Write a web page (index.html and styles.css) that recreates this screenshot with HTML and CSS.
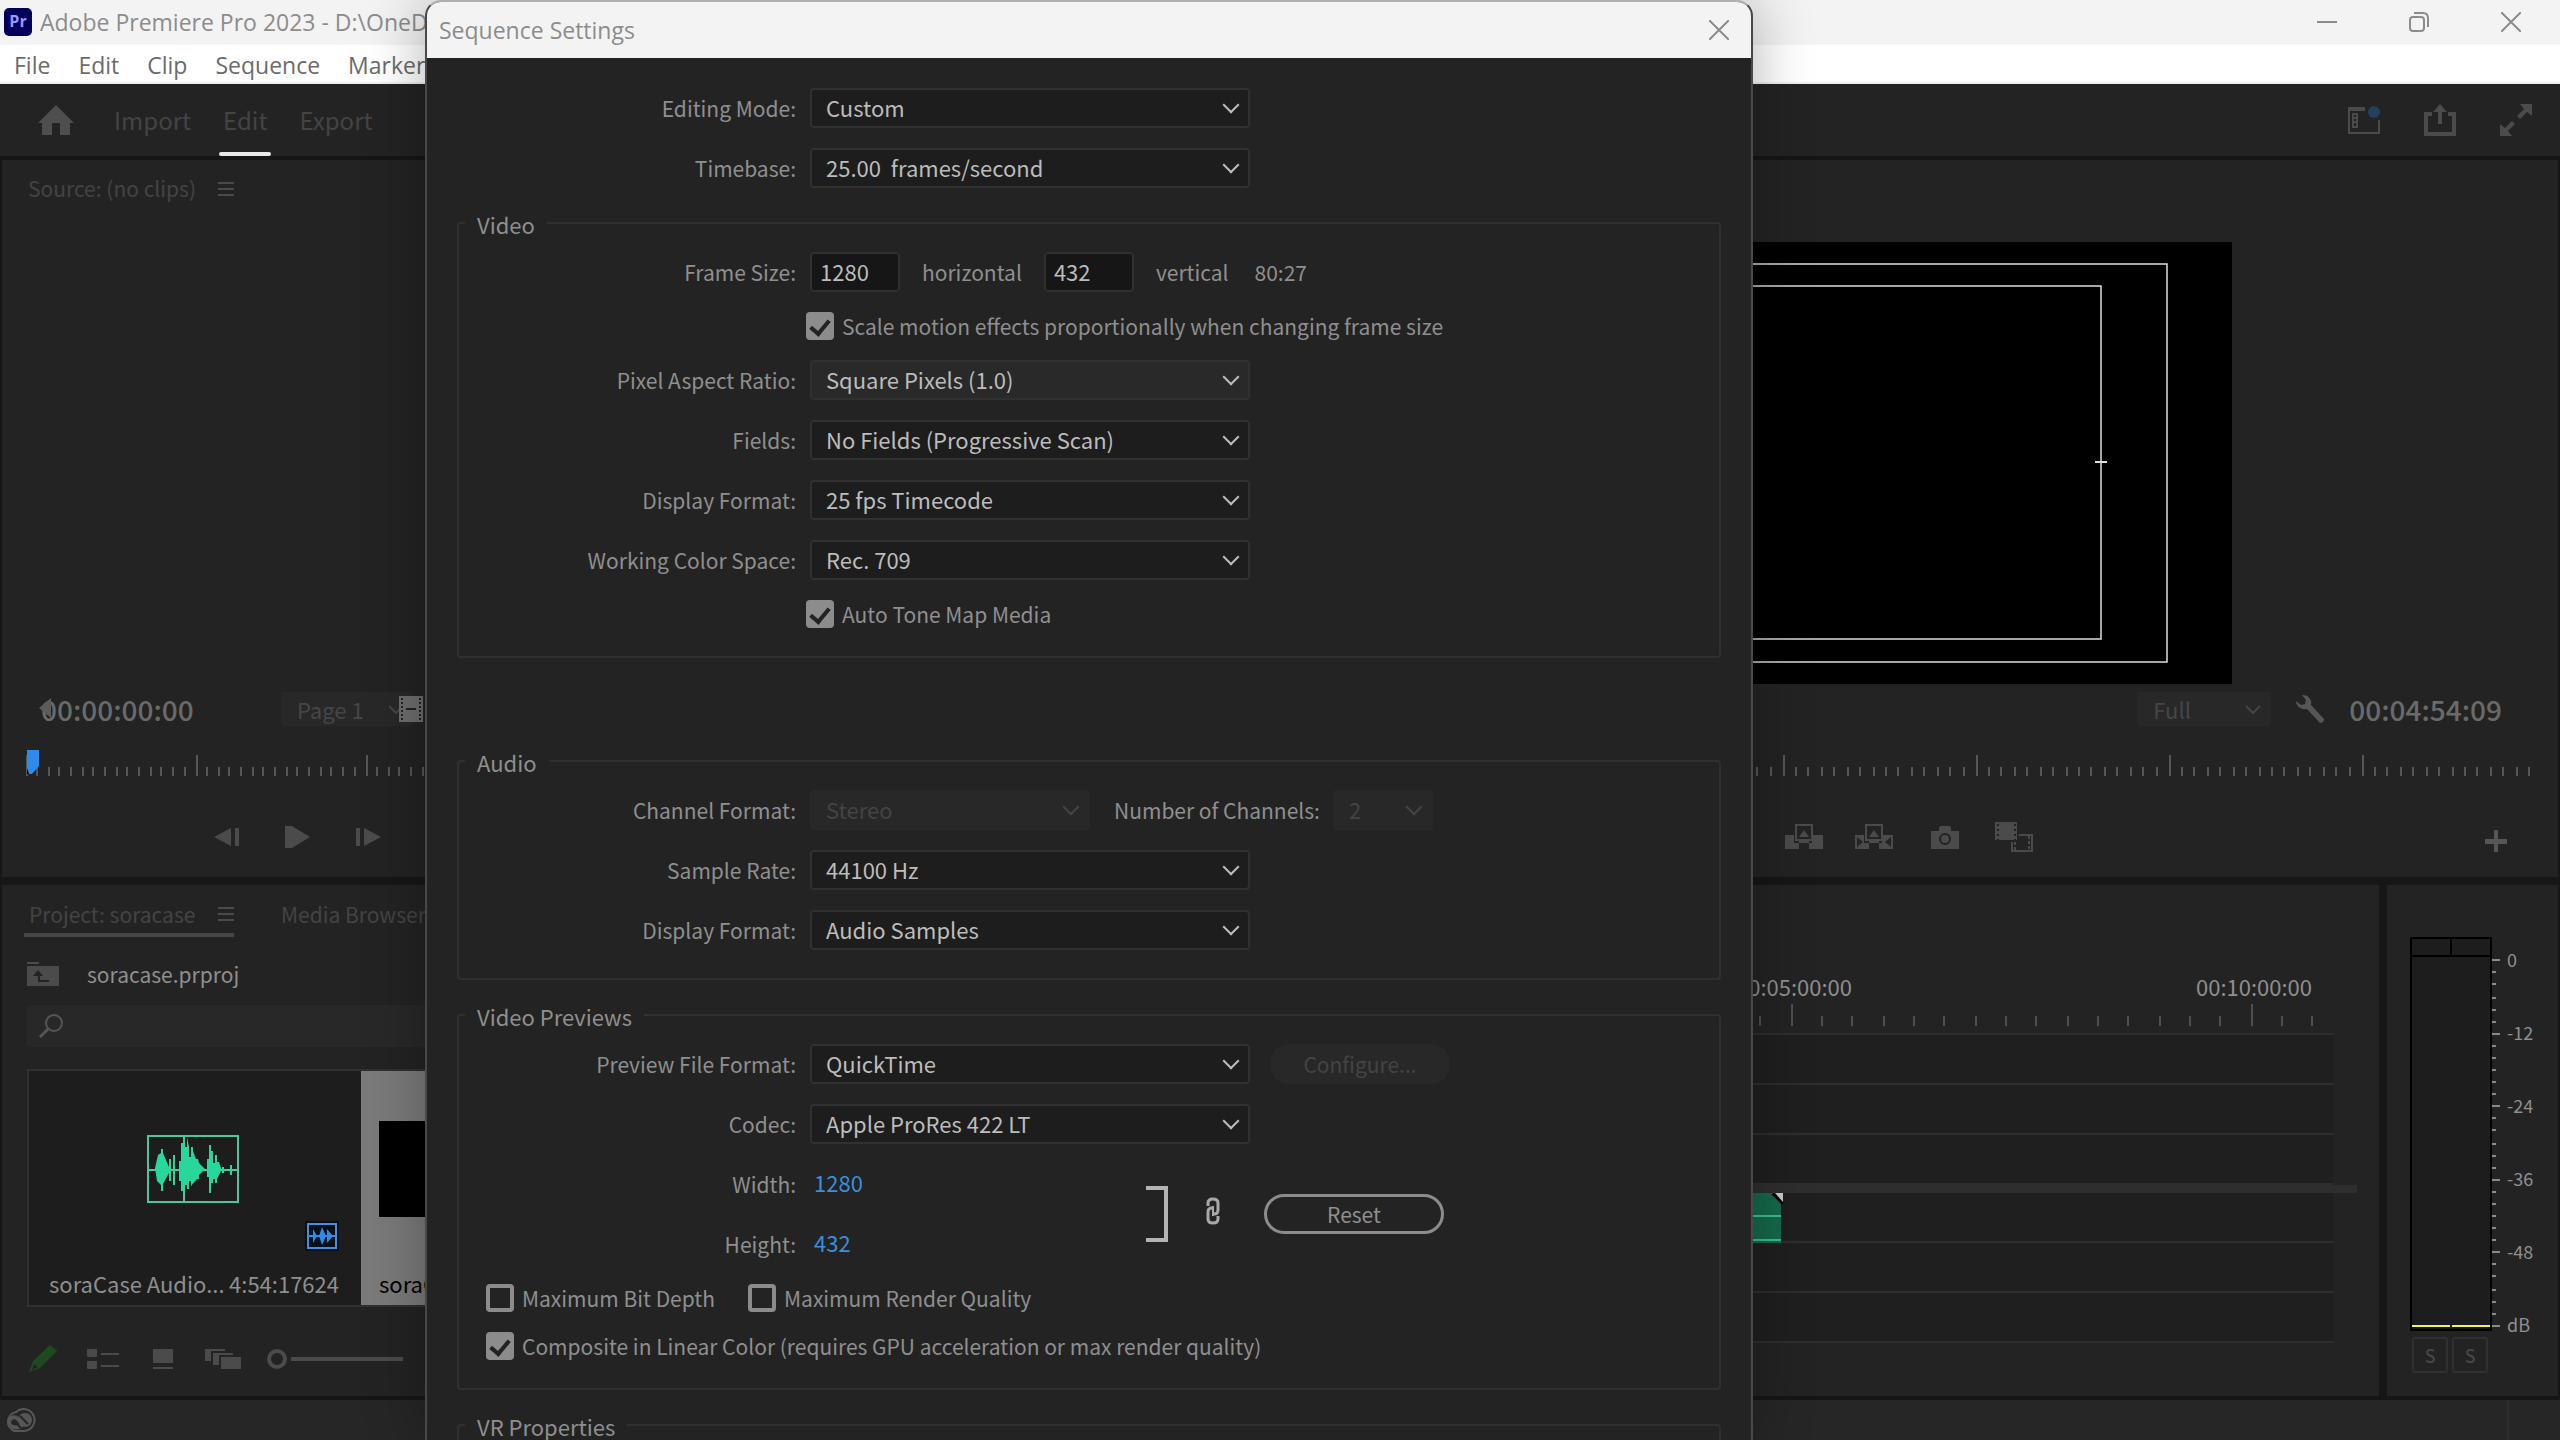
FILE: index.html
```html
<!DOCTYPE html>
<html lang="en">
<head>
<meta charset="utf-8">
<title>Adobe Premiere Pro 2023</title>
<link rel="stylesheet" href="styles.css">
</head>
<body>
<div class="app">
  <header class="titlebar">
    <span class="pr-logo">Pr</span>
    <span class="app-title">Adobe Premiere Pro 2023 - D:\OneD</span>
    <div class="window-controls">
      <button type="button" aria-label="Minimize"><svg width="20" height="20" viewBox="0 0 20 20"><path d="M0 10H20" stroke="#8c8c8c" stroke-width="2"/></svg></button>
      <button type="button" aria-label="Restore"><svg width="20" height="20" viewBox="0 0 20 20" fill="none" stroke="#8c8c8c" stroke-width="2"><rect x="1" y="5" width="14" height="14" rx="3"/><path d="M5 1H14Q19 1 19 6V15"/></svg></button>
      <button type="button" aria-label="Close"><svg width="20" height="20" viewBox="0 0 20 20"><path d="M0 0L20 20M20 0L0 20" stroke="#8c8c8c" stroke-width="2"/></svg></button>
    </div>
  </header>

  <nav class="menubar">
    <button type="button">File</button>
    <button type="button">Edit</button>
    <button type="button">Clip</button>
    <button type="button">Sequence</button>
    <button type="button">Markers</button>
  </nav>

  <div class="modes">
    <button type="button" class="home" aria-label="Home"><svg width="36" height="30" viewBox="0 0 36 30"><path d="M18 0L36 18H32V30H22V19Q22 18 21 18H15Q14 18 14 19V30H4V18H0Z" fill="#4e4e4e"/></svg></button>
    <button type="button" class="mode">Import</button>
    <button type="button" class="mode mode-active">Edit</button>
    <button type="button" class="mode">Export</button>
    <div class="mode-tools">
      <button type="button" aria-label="Workspaces"><svg width="32" height="32" viewBox="0 0 32 32"><path d="M0 3H17V7H2V28H30V16H32V30H0Z" fill="#4b4b4b"/><rect x="5" y="10" width="4" height="13" fill="none" stroke="#4b4b4b" stroke-width="2"/><path d="M6 14H9M6 18H9" stroke="#4b4b4b" stroke-width="2"/><circle cx="26" cy="8" r="6" fill="#23405c"/></svg></button>
      <button type="button" aria-label="Quick export"><svg width="32" height="32" viewBox="0 0 32 32"><path d="M8 10H2V30H30V10H24" fill="none" stroke="#4b4b4b" stroke-width="4"/><path d="M16 0L23 8H18V20H14V8H9Z" fill="#4b4b4b"/></svg></button>
      <button type="button" aria-label="Full screen"><svg width="32" height="32" viewBox="0 0 32 32"><path d="M20 0H32V12L27 8L20 15L17 12L24 5ZM12 32H0V20L5 24L12 17L15 20L8 27Z" fill="#4b4b4b"/></svg></button>
    </div>
  </div>

  <main class="workspace">
    <div class="upper">
      <section class="panel source">
        <div class="tabs">
          <span>Source: (no clips)</span>
          <svg width="16" height="14" viewBox="0 0 16 14"><path d="M0 1H16M0 7H16M0 13H16" stroke="#4b4b4b" stroke-width="2"/></svg>
        </div>
        <div class="screen"></div>
        <div class="controls">
          <span class="timecode source-time"><svg class="in-mark" width="12" height="20" viewBox="0 0 12 20"><path d="M12 0V20L0 10Z" fill="#5c5c5c"/></svg>00:00:00:00</span>
          <button type="button" class="dim-select page-select" disabled>Page 1<svg width="16" height="9" viewBox="0 0 16 9"><path d="M1 1L8 8L15 1" fill="none" stroke="#464646" stroke-width="2"/></svg></button>
          <svg class="film" width="24" height="26" viewBox="0 0 24 26"><rect width="24" height="26" fill="#6d6d6d"/><path d="M3 2V26M21 2V26" stroke="#232323" stroke-width="2" stroke-dasharray="2 2"/><path d="M7 13H17" stroke="#232323" stroke-width="2"/></svg>
        </div>
        <svg class="ruler" width="100%" height="26">
          <defs><pattern id="source-ticks" x="24" width="170" height="26" patternUnits="userSpaceOnUse"><path d="M1 5V26M11 17V26M23 17V26M33 17V26M45 17V26M57 17V26M67 17V26M79 17V26M91 17V26M101 17V26M113 17V26M125 17V26M135 17V26M147 17V26M159 17V26" stroke="#565656" stroke-width="2"/></pattern></defs>
          <rect x="24" width="540" height="26" fill="url(#source-ticks)"/>
          <rect x="25" y="18" width="2" height="6" fill="#000"/>
          <path d="M25 0H37V16L30 24H27L25 18Z" fill="#2d8ceb"/>
        </svg>
        <div class="transport source-transport">
          <button type="button" aria-label="Step back"><svg width="25" height="22" viewBox="0 0 25 22"><path d="M0 11L17 2V20ZM21 2H25V20H21Z" fill="#4b4b4b"/></svg></button>
          <button type="button" aria-label="Play"><svg width="25" height="22" viewBox="0 0 25 22"><path d="M0 0H7L25 11L7 22H0Z" fill="#4b4b4b"/></svg></button>
          <button type="button" aria-label="Step forward"><svg width="25" height="22" viewBox="0 0 25 22"><path d="M0 2H4V20H0ZM8 2L25 11L8 20Z" fill="#4b4b4b"/></svg></button>
        </div>
      </section>

      <section class="panel program">
        <div class="tabs"></div>
        <div class="screen">
          <svg class="video" viewBox="0 0 1308 442">
            <rect width="1308" height="442" fill="#000"/>
            <g fill="none" stroke="#dedede" stroke-width="1.5"><rect x="65" y="22" width="1178" height="398"/><rect x="131" y="44" width="1046" height="353"/><path d="M1171 220H1183" stroke-width="2"/></g>
          </svg>
        </div>
        <div class="controls program-controls">
          <button type="button" class="dim-select full-select" disabled>Full<svg width="16" height="9" viewBox="0 0 16 9"><path d="M1 1L8 8L15 1" fill="none" stroke="#464646" stroke-width="2"/></svg></button>
          <svg width="28" height="28" viewBox="0 0 28 28"><path d="M6 0C13 0 16 5 15 10L28 24Q28 28 24 28L11 14C5 15 0 11 0 6L5 10L9 9L10 5Z" fill="#565656"/></svg>
          <span class="timecode program-time">00:04:54:09</span>
        </div>
        <svg class="ruler" width="100%" height="26">
          <defs><pattern id="program-ticks" x="27" width="193" height="26" patternUnits="userSpaceOnUse"><path d="M1 5V26M13 17V26M25 17V26M39 17V26M51 17V26M65 17V26M77 17V26M91 17V26M103 17V26M115 17V26M129 17V26M141 17V26M155 17V26M167 17V26M181 17V26" stroke="#565656" stroke-width="2"/></pattern></defs>
          <rect x="27" width="1907" height="26" fill="url(#program-ticks)"/>
        </svg>
        <div class="transport program-transport">
          <button type="button" aria-label="Lift"><svg width="38" height="30" viewBox="0 0 38 30"><path d="M0 13H9V21H27V13H38V27H24V19H14V27H0Z" fill="#4b4b4b"/><rect x="11" y="3" width="16" height="15" fill="#232323" stroke="#4b4b4b" stroke-width="2"/><path d="M19 8L24 15H14Z" fill="#4b4b4b"/></svg></button>
          <button type="button" aria-label="Extract"><svg width="38" height="30" viewBox="0 0 38 30"><path d="M0 13H9V21H27V13H38V27H24V19H14V27H0Z" fill="#4b4b4b"/><rect x="11" y="3" width="16" height="15" fill="#232323" stroke="#4b4b4b" stroke-width="2"/><path d="M19 8L24 15H14Z" fill="#4b4b4b"/><path d="M2 15L8 20L2 25ZM36 15L30 20L36 25Z" fill="#232323"/></svg></button>
          <button type="button" class="snapshot" aria-label="Export frame"><svg width="28" height="30" viewBox="0 0 28 30"><path d="M0 9H8V6Q8 4 10 4H18Q20 4 20 6V9H28V27H0Z" fill="#4b4b4b"/><circle cx="14" cy="17" r="5" fill="none" stroke="#232323" stroke-width="2"/></svg></button>
          <button type="button" aria-label="Comparison view"><svg width="38" height="30" viewBox="0 0 38 30"><path d="M0 0H22V18H0Z" fill="#4b4b4b"/><path d="M3 2V18M20 2V18" stroke="#232323" stroke-width="2" stroke-dasharray="2 3"/><path d="M24 13H37V29H17V20" fill="none" stroke="#4b4b4b" stroke-width="2"/><path d="M20 20V29M34 14V29" stroke="#4b4b4b" stroke-width="2" stroke-dasharray="3 2"/></svg></button>
          <button type="button" class="add" aria-label="Button editor"><svg width="22" height="30" viewBox="0 0 22 30"><path d="M9 8H13V17H22V22H13V30H9V22H0V17H9Z" fill="#565656"/></svg></button>
        </div>
      </section>
    </div>

    <div class="lower">
      <section class="panel project">
        <div class="tabs project-tabs">
          <span class="tab-active">Project: soracase<svg width="16" height="14" viewBox="0 0 16 14"><path d="M0 1H16M0 7H16M0 13H16" stroke="#4b4b4b" stroke-width="2"/></svg></span>
          <span>Media Browser</span>
        </div>
        <div class="project-path">
          <svg width="32" height="24" viewBox="0 0 32 24"><path d="M0 0H12V2H0ZM0 4H32V24H0Z" fill="#4b4b4b"/><path d="M6 14L11 8L16 14H13V18H22V20H11V14Z" fill="#232323"/></svg>
          <span>soracase.prproj</span>
        </div>
        <label class="search"><svg width="24" height="24" viewBox="0 0 24 24" fill="none" stroke="#565656"><circle cx="15" cy="9" r="8" stroke-width="2"/><path d="M9 15L1 23" stroke-width="3"/></svg><input type="search" aria-label="Search project"></label>
        <div class="bin">
          <article class="clip-card">
            <svg class="wave" width="92" height="68" viewBox="0 0 92 68"><rect x="1" y="1" width="90" height="66" fill="none" stroke="#4cc79a" stroke-width="2"/><path d="M0 35H92M37 0V68" stroke="#4cc79a" stroke-width="2"/><path d="M8 33L11 20L14 18V14H16V18L22 32V38L16 49V56H14V50L10 46ZM22 24H24V46H22ZM26 20H28V50H26ZM32 26H34V8H36V2H38V12H40V2L42 12V22H44V12H46V16L49 24H51L52 28L58 34L52 40V44H50L44 51V46H42V54H40V50H38V56H34V46H32ZM60 24H62V10H64V16H66V28H68V20H70V27H72L74 33V36L72 40L70 44V48H68V44H66V48H64V58H62V42H60ZM75 32H77V38H75ZM83 30H85V40H83Z" fill="#28d79b"/></svg>
            <svg class="badge" width="34" height="30" viewBox="0 0 34 30"><rect width="34" height="30" fill="#08101a"/><rect x="3" y="3" width="28" height="24" fill="none" stroke="#4a8ed6" stroke-width="2"/><path d="M3 15H31" stroke="#2d8ceb" stroke-width="2"/><path d="M8 8L12 15L8 22ZM14 15L17 6L21 15L17 24ZM22 8L28 15L22 22Z" fill="#2d8ceb"/></svg>
            <div class="caption"><span>soraCase Audio...</span><span>4:54:17624</span></div>
          </article>
          <article class="clip-card selected">
            <div class="thumb"></div>
            <div class="caption"><span>soraCase</span></div>
          </article>
        </div>
        <div class="bin-tools">
          <svg class="pencil" width="28" height="28" viewBox="0 0 28 28"><path d="M21 0L28 6L11 23L0 27L4 16Z" fill="#1f4a20"/><path d="M5 19L9 22L3 25Z" fill="#232323"/></svg>
          <svg width="34" height="22" viewBox="0 0 34 22"><rect y="1" width="10" height="8" rx="1" fill="#4b4b4b"/><rect y="13" width="10" height="8" rx="1" fill="#4b4b4b"/><path d="M14 6H32M14 18H32" stroke="#4b4b4b" stroke-width="2"/></svg>
          <svg width="20" height="22" viewBox="0 0 20 22"><path d="M0 1H20V15H0ZM0 19H20V21H0Z" fill="#4b4b4b"/></svg>
          <svg width="36" height="22" viewBox="0 0 36 22"><path d="M0 1H20V3H6V13H0ZM8 5H28V7H14V17H8ZM16 9H36V21H16Z" fill="#4b4b4b"/></svg>
          <svg class="zoom-slider" width="136" height="22" viewBox="0 0 136 22"><circle cx="10" cy="11" r="8" fill="none" stroke="#4b4b4b" stroke-width="4"/><path d="M24 11H136" stroke="#4b4b4b" stroke-width="4"/></svg>
        </div>
      </section>

      <section class="panel timeline">
        <div class="time-labels"><span>00:05:00:00</span><span>00:10:00:00</span></div>
        <svg class="time-ruler" width="100%" height="22">
          <defs><pattern id="time-ticks" x="273" width="460" height="22" patternUnits="userSpaceOnUse"><path d="M1 0V22M31 12V22M61 12V22M93 12V22M123 12V22M153 12V22M185 12V22M215 12V22M245 12V22M277 12V22M307 12V22M337 12V22M369 12V22M399 12V22M429 12V22" stroke="#4f4f4f" stroke-width="2"/></pattern></defs>
          <rect x="273" width="1444" height="22" fill="url(#time-ticks)"/>
        </svg>
        <div class="tracks">
          <div class="track"></div>
          <div class="track"></div>
          <div class="track"></div>
          <div class="divider"></div>
          <div class="track"><svg class="audio-clip" width="451" height="50" viewBox="0 0 451 50"><rect width="449" height="50" fill="#15694a"/><path d="M0 23H449M0 47H449" stroke="#3dbd8e" stroke-width="2"/><path d="M441 0L451 10" stroke="#000" stroke-width="4"/><path d="M443 0H451V9Z" fill="#c8c8c8"/></svg></div>
          <div class="track"></div>
          <div class="track"></div>
        </div>
      </section>

      <section class="panel meters">
        <div class="meter-row">
          <div class="meter-box">
            <div class="peaks"><i></i><i></i></div>
            <div class="levels"><i></i><i></i></div>
          </div>
          <svg class="meter-ticks" width="8" height="394" viewBox="0 0 8 394"><path d="M0 23H8M0 97H8M0 169H8M0 243H8M0 315H8M0 389H8M0 35H4M0 47H4M0 61H4M0 73H4M0 85H4M0 109H4M0 121H4M0 133H4M0 145H4M0 157H4M0 181H4M0 193H4M0 207H4M0 219H4M0 231H4M0 255H4M0 267H4M0 279H4M0 291H4M0 303H4M0 327H4M0 339H4M0 353H4M0 365H4M0 377H4" stroke="#8a8a8a" stroke-width="2"/></svg>
          <div class="meter-scale"><span>0</span><span>-12</span><span>-24</span><span>-36</span><span>-48</span><span>dB</span></div>
        </div>
        <div class="solo"><button type="button">S</button><button type="button">S</button></div>
      </section>
    </div>
  </main>

  <footer class="statusbar">
    <svg width="32" height="24" viewBox="0 0 32 24" fill="none" stroke="#565656"><path d="M10 23H20A11 11 0 1 0 12 4A10 10 0 0 0 10 23Z" stroke-width="2"/><circle cx="21" cy="12" r="7" fill="#565656" stroke="none"/><path d="M18 17C14 21 5 20 5 14C5 9 11 8 14 11L20 17" stroke-width="4"/><path d="M11 14L17 20M16 8L24 16" stroke="#262626" stroke-width="2"/></svg>
    <span class="status-end"></span>
  </footer>

  <form class="dialog" aria-label="Sequence Settings">
    <header class="dialog-title">
      <span>Sequence Settings</span>
      <button type="button" aria-label="Close"><svg width="20" height="20" viewBox="0 0 20 20"><path d="M0 0L20 20M20 0L0 20" stroke="#8c8c8c" stroke-width="2"/></svg></button>
    </header>
    <div class="dialog-body">
      <div class="rows general">
        <div class="row"><label for="mode">Editing Mode:</label><span class="select"><select id="mode"><option>Custom</option></select></span></div>
        <div class="row"><label for="timebase">Timebase:</label><span class="select"><select id="timebase"><option>25.00&nbsp; frames/second</option></select></span></div>
      </div>

      <fieldset class="group-video">
        <legend>Video</legend>
        <div class="rows">
          <div class="row"><label for="fw">Frame Size:</label><input id="fw" class="number" type="text" value="1280"><span class="unit">horizontal</span><input class="number" type="text" value="432" aria-label="Frame height"><span class="unit">vertical</span><span class="ratio">80:27</span></div>
          <label class="check check-indent"><input type="checkbox" checked>Scale motion effects proportionally when changing frame size</label>
          <div class="row"><label for="par">Pixel Aspect Ratio:</label><span class="select"><select id="par" class="hovered"><option>Square Pixels (1.0)</option></select></span></div>
          <div class="row"><label for="fields">Fields:</label><span class="select"><select id="fields"><option>No Fields (Progressive Scan)</option></select></span></div>
          <div class="row"><label for="vdf">Display Format:</label><span class="select"><select id="vdf"><option>25 fps Timecode</option></select></span></div>
          <div class="row"><label for="wcs">Working Color Space:</label><span class="select"><select id="wcs"><option>Rec. 709</option></select></span></div>
          <label class="check check-indent"><input type="checkbox" checked>Auto Tone Map Media</label>
        </div>
      </fieldset>

      <fieldset class="group-audio">
        <legend>Audio</legend>
        <div class="rows">
          <div class="row"><label for="cf">Channel Format:</label><span class="select select-channel"><select id="cf" disabled><option>Stereo</option></select></span><label for="nc" class="channels">Number of Channels:</label><span class="select select-count"><select id="nc" disabled><option>2</option></select></span></div>
          <div class="row"><label for="sr">Sample Rate:</label><span class="select"><select id="sr"><option>44100 Hz</option></select></span></div>
          <div class="row"><label for="adf">Display Format:</label><span class="select"><select id="adf"><option>Audio Samples</option></select></span></div>
        </div>
      </fieldset>

      <fieldset class="group-preview">
        <legend>Video Previews</legend>
        <div class="rows">
          <div class="row"><label for="pff">Preview File Format:</label><span class="select"><select id="pff"><option>QuickTime</option></select></span><button type="button" class="pill configure" disabled>Configure...</button></div>
          <div class="row"><label for="codec">Codec:</label><span class="select"><select id="codec"><option>Apple ProRes 422 LT</option></select></span></div>
          <div class="size-block">
            <div class="rows size-rows">
              <div class="row"><label for="pw">Width:</label><input id="pw" class="hot" type="text" value="1280"></div>
              <div class="row"><label for="ph">Height:</label><input id="ph" class="hot" type="text" value="432"></div>
            </div>
            <svg width="22" height="56" viewBox="0 0 22 56"><path d="M0 2H20V54H0" fill="none" stroke="#b4b4b4" stroke-width="4"/></svg>
            <svg class="link" width="14" height="28" viewBox="0 0 14 28" fill="none" stroke="#a8a8a8" stroke-width="3"><path d="M2 9V6Q2 2 7 2Q12 2 12 6V13Q12 17 8 17M12 19V22Q12 26 7 26Q2 26 2 22V15Q2 11 6 11"/><path d="M7 9V19" stroke-width="2"/></svg>
            <button type="button" class="pill reset">Reset</button>
          </div>
          <div class="checks">
            <label class="check"><input type="checkbox">Maximum Bit Depth</label>
            <label class="check"><input type="checkbox">Maximum Render Quality</label>
          </div>
          <div class="checks">
            <label class="check"><input type="checkbox" checked>Composite in Linear Color (requires GPU acceleration or max render quality)</label>
          </div>
        </div>
      </fieldset>

      <fieldset class="group-vr">
        <legend>VR Properties</legend>
      </fieldset>
    </div>
  </form>
</div>
</body>
</html>
```
FILE: styles.css
```css
* { box-sizing: border-box; }

body {
  margin: 0;
  background: #161616;
  color: #8f8f8f;
  font: 21px/32px "Noto Sans CJK SC", "Noto Sans", sans-serif;
}

button, input, select {
  font: inherit;
  color: inherit;
}

button {
  padding: 0;
  border: 0;
  background: none;
}

svg { display: block; flex: none; }

.app {
  position: relative;
  display: flex;
  flex-direction: column;
  height: 100vh;
  min-height: 1000px;
  overflow: hidden;
}

/* Window chrome */
.titlebar {
  display: flex;
  align-items: center;
  height: 45px;
  padding: 0 39px 2px 4px;
  background: #f3f3f3;
  color: #8c8c8c;
  font: 23px/32px "Open Sans", "Noto Sans", sans-serif;
}

.pr-logo {
  width: 28px;
  height: 28px;
  margin-right: 8px;
  border-radius: 5px;
  background: #00005b;
  color: #9999ff;
  font: bold 16px/26px "Open Sans", sans-serif;
  text-align: center;
}

.app-title { flex: 1; white-space: nowrap; }

.window-controls { display: flex; gap: 72px; }

.menubar {
  display: flex;
  gap: 28px;
  height: 39px;
  padding-left: 14px;
  border-bottom: 2px solid #f0f0f0;
  background: #fff;
  color: #6b6b6b;
  font: 23px/40px "Open Sans", "Noto Sans", sans-serif;
}

.menubar button { line-height: 40px; }

.modes {
  display: flex;
  align-items: center;
  height: 72px;
  padding: 0 28px 0 38px;
  background: #232323;
  color: #444;
  font-size: 24px;
}

.home { margin-right: 40px; }

.mode {
  position: relative;
  height: 72px;
  margin-right: 32px;
}

.mode-active::after {
  content: "";
  position: absolute;
  right: -4px;
  bottom: 0;
  left: -4px;
  height: 4px;
  border-radius: 2px;
  background: #e8e8e8;
}

.mode-tools {
  display: flex;
  gap: 44px;
  margin-left: auto;
}

/* Panels */
.workspace {
  flex: 1;
  display: grid;
  grid-template-rows: 717fr 511fr;
  grid-template-columns: minmax(0, 1fr);
  gap: 8px;
  padding: 4px 2px;
  min-height: 0;
}

.upper, .lower {
  display: flex;
  gap: 8px;
  min-height: 0;
}

.panel {
  display: flex;
  flex-direction: column;
  min-width: 0;
  overflow: hidden;
  background: #232323;
}

.source, .project { width: 588px; flex: none; }
.program, .timeline { flex: 1; }
.meters { width: 171px; flex: none; }

.tabs {
  display: flex;
  gap: 22px;
  height: 82px;
  padding: 12px 26px;
  color: #444;
}

.tabs svg { margin-top: 10px; }

.screen {
  flex: 1;
  display: flex;
  justify-content: center;
  min-height: 0;
}

.video {
  width: 100%;
  max-width: 1308px;
  height: 442px;
}

.controls {
  display: flex;
  align-items: center;
  height: 34px;
  margin: 8px 0 24px;
}

.timecode {
  position: relative;
  color: #6a6a6a;
  font-size: 28px;
  font-weight: 500;
}

.source-time {
  width: 240px;
  margin-left: 39px;
}

.in-mark {
  position: absolute;
  top: 5px;
  left: -2px;
}

.dim-select {
  display: flex;
  align-items: center;
  justify-content: space-between;
  height: 34px;
  padding: 0 10px 0 16px;
  border-radius: 4px;
  background: #282828;
  color: #464646;
  font-size: 22px;
}

.page-select { width: 133px; }
.film { margin-left: -15px; }

.program-controls {
  justify-content: flex-end;
  gap: 25px;
  padding-right: 56px;
}

.full-select { width: 134px; }

.ruler { flex: none; }

.transport {
  display: flex;
  align-items: center;
  height: 60px;
  margin: 31px 0 10px;
}

.source-transport {
  gap: 46px;
  padding-left: 212px;
}

.program-transport {
  gap: 32px;
  padding: 0 51px 0 1187px;
}

.snapshot { margin: 0 4px 0 6px; }
.add { margin-left: auto; }

/* Project panel */
.project-tabs {
  gap: 42px;
  height: 70px;
  padding: 14px 22px 0;
  line-height: 30px;
}

.project-tabs span {
  flex: none;
  height: 38px;
  padding-left: 5px;
  white-space: nowrap;
}

.tab-active {
  display: flex;
  justify-content: space-between;
  width: 210px;
  border-bottom: 4px solid #464646;
}

.tab-active svg { margin-top: 8px; }

.project-path {
  display: flex;
  align-items: center;
  gap: 28px;
  height: 38px;
  padding-left: 25px;
}

.search {
  display: flex;
  align-items: center;
  flex: none;
  height: 42px;
  margin: 12px 0 22px 25px;
  padding-left: 12px;
  border-radius: 4px;
  background: #282828;
}

.search input {
  flex: 1;
  border: 0;
  background: none;
}

.bin {
  display: flex;
  flex: none;
  height: 238px;
  margin-left: 25px;
  border: 2px solid #303030;
}

.clip-card {
  display: flex;
  flex-direction: column;
  flex: none;
  width: 332px;
  padding: 64px 22px 6px 20px;
  background: #1d1d1d;
}

.clip-card.selected {
  padding: 50px 18px 6px;
  background: #7a7a7a;
  color: #000;
}

.wave { margin-left: 98px; }
.badge { align-self: flex-end; margin-top: 18px; }
.thumb { height: 96px; background: #000; }

.caption {
  display: flex;
  justify-content: space-between;
  margin-top: auto;
  font-size: 22px;
}

.bin-tools {
  display: flex;
  align-items: center;
  gap: 32px;
  height: 50px;
  margin-top: 27px;
  padding-left: 27px;
}

.pencil { margin-right: -2px; }
.zoom-slider { margin-left: -6px; }

/* Timeline */
.time-labels {
  display: grid;
  grid-auto-flow: column;
  grid-auto-columns: 460px;
  flex: none;
  height: 30px;
  margin-top: 87px;
  padding-left: 966px;
  font-size: 22px;
  line-height: 28px;
  text-align: center;
}

.time-ruler { flex: none; margin: 2px 0; }

.tracks {
  width: 1735px;
  max-width: 100%;
  border-top: 2px solid #2e2e2e;
  margin-top: 5px;
}

.track {
  height: 50px;
  padding-left: 734px;
  border-bottom: 2px solid #2e2e2e;
  background: #1f1f1f;
}

.divider {
  height: 8px;
  margin-right: -24px;
  background: #2e2e2e;
}

/* Audio meters */
.meter-row {
  display: flex;
  margin: 52px 0 0 23px;
}

.meter-box {
  width: 82px;
  height: 394px;
  border: 2px solid #000;
  background: #1d1d1d;
}

.peaks, .levels { display: flex; gap: 2px; }

.peaks {
  height: 18px;
  border-bottom: 2px solid #000;
  background: #000;
}

.peaks i { flex: 1; background: #1d1d1d; }

.levels {
  height: 372px;
  align-items: flex-end;
}

.levels i {
  flex: 1;
  height: 4px;
  border-top: 2px solid #f2f25a;
  background: #14140a;
}

.meter-scale {
  display: grid;
  grid-auto-rows: 73px;
  height: 386px;
  margin: 8px 0 0 7px;
  font-size: 18px;
  line-height: 28px;
}

.solo {
  display: flex;
  gap: 4px;
  margin: 6px 0 0 25px;
}

.solo button {
  width: 36px;
  height: 36px;
  border: 2px solid #303030;
  border-radius: 3px;
  color: #4b4b4b;
  font-size: 18px;
  line-height: 28px;
}

.statusbar {
  display: flex;
  align-items: center;
  justify-content: space-between;
  height: 40px;
  padding-left: 4px;
  background: #262626;
}

.status-end {
  width: 53px;
  height: 40px;
  border-left: 2px solid #2e2e2e;
}

/* Sequence Settings dialog */
.dialog {
  position: absolute;
  top: 0;
  bottom: 0;
  left: 425px;
  width: 1328px;
  border: 2px solid #484848;
  border-top-color: #b0b0b0;
  border-bottom: 0;
  border-radius: 16px 16px 0 0;
  background: #232323;
  box-shadow: 0 0 60px rgba(0, 0, 0, .3);
  overflow: hidden;
}

.dialog-title {
  display: flex;
  align-items: center;
  justify-content: space-between;
  height: 56px;
  padding: 0 22px 0 12px;
  background: #f3f3f3;
  color: #8c8c8c;
  font: 23px/32px "Open Sans", "Noto Sans", sans-serif;
}

.dialog-body { padding: 30px 30px 0; }

.rows {
  display: flex;
  flex-direction: column;
  gap: 20px;
}

.general { padding-left: 2px; }

.row {
  display: flex;
  align-items: center;
  height: 40px;
}

.row label:first-child {
  width: 337px;
  margin-right: 14px;
  text-align: right;
}

fieldset {
  margin: 0;
  padding: 13px 0 28px;
  border: 2px solid #303030;
  border-radius: 4px;
}

legend {
  height: 32px;
  margin-left: 6px;
  padding: 1px 12px 0;
  font-size: 22px;
}

.group-video { margin-top: 19px; }
.group-audio { margin-top: 87px; }
.group-preview, .group-vr { margin-top: 19px; }
.group-vr { height: 200px; }

.select {
  position: relative;
  width: 440px;
}

.select::after {
  content: "";
  position: absolute;
  top: 11px;
  right: 13px;
  width: 10px;
  height: 10px;
  border: solid #bcbcbc;
  border-width: 0 2px 2px 0;
  transform: rotate(45deg);
  pointer-events: none;
}

select {
  display: block;
  width: 100%;
  height: 40px;
  padding: 0 14px 2px;
  border: 2px solid #303030;
  border-radius: 4px;
  background: #1d1d1d;
  color: #bcbcbc;
  font-size: 22px;
  appearance: none;
}

select.hovered { background: #292929; }

select:disabled {
  border-color: #282828;
  background: #282828;
  color: #444;
  opacity: 1;
}

.select:has(:disabled)::after { border-color: #444; }

.select-channel { width: 280px; }
.select-count { width: 100px; }
.channels { margin: 0 13px 0 24px; }

.number {
  width: 90px;
  height: 40px;
  padding: 0 8px 2px;
  border: 2px solid #303030;
  border-radius: 4px;
  background: #161616;
  color: #bcbcbc;
  font-size: 22px;
}

.unit { margin: 0 22px; }
.ratio { margin-left: 4px; }

.check {
  display: flex;
  align-items: center;
  gap: 8px;
  height: 28px;
}

.check-indent { margin-left: 347px; }

.check input {
  flex: none;
  width: 28px;
  height: 28px;
  margin: 0;
  border: 4px solid #8c8c8c;
  border-radius: 4px;
  appearance: none;
}

.check input:checked {
  display: grid;
  place-items: center;
  background: #8c8c8c;
}

.check input:checked::after {
  content: "";
  width: 8px;
  height: 15px;
  margin-bottom: 4px;
  border: solid #232323;
  border-width: 0 4px 4px 0;
  transform: rotate(40deg);
}

.pill {
  width: 180px;
  height: 40px;
  border-radius: 20px;
}

.configure {
  margin-left: 20px;
  background: #282828;
  color: #444;
}

.reset { border: 3px solid #8c8c8c; }

.size-block {
  display: flex;
  align-items: center;
}

.size-rows { width: 687px; }

.link { margin: 0 44px 6px 38px; }

.hot {
  width: 90px;
  padding: 0 4px 4px;
  border: 0;
  background: none;
  color: #3a8ede;
  font-size: 22px;
}

.checks {
  display: flex;
  gap: 33px;
  margin-left: 27px;
}
```
